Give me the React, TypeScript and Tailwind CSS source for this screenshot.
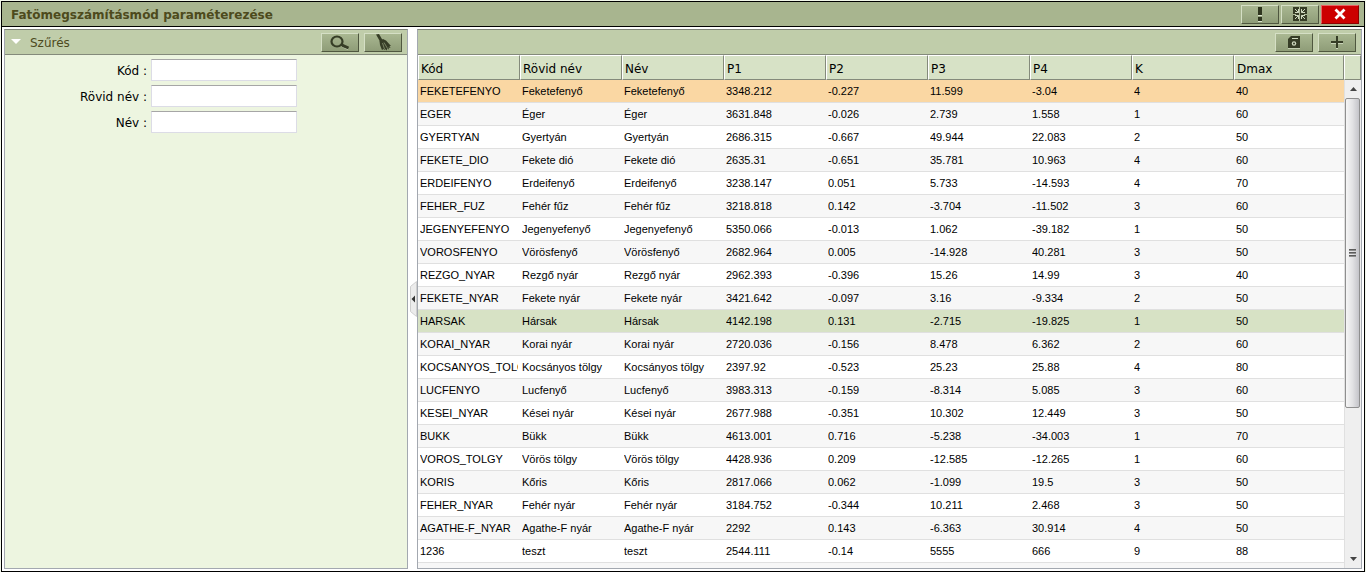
import type { ReactNode } from "react";

type Row = {
  kod: string;
  rovidNev: string;
  nev: string;
  values: string[];
};

const columns = ["Kód", "Rövid név", "Név", "P1", "P2", "P3", "P4", "K", "Dmax"];

const filters = [
  { id: "kod", label: "Kód :" },
  { id: "rovidNev", label: "Rövid név :" },
  { id: "nev", label: "Név :" },
];

function row(kod: string, nev: string, ...values: string[]): Row {
  return { kod, rovidNev: nev, nev, values };
}

const rows: Row[] = [
  row("FEKETEFENYO", "Feketefenyő", "3348.212", "-0.227", "11.599", "-3.04", "4", "40"),
  row("EGER", "Éger", "3631.848", "-0.026", "2.739", "1.558", "1", "60"),
  row("GYERTYAN", "Gyertyán", "2686.315", "-0.667", "49.944", "22.083", "2", "50"),
  row("FEKETE_DIO", "Fekete dió", "2635.31", "-0.651", "35.781", "10.963", "4", "60"),
  row("ERDEIFENYO", "Erdeifenyő", "3238.147", "0.051", "5.733", "-14.593", "4", "70"),
  row("FEHER_FUZ", "Fehér fűz", "3218.818", "0.142", "-3.704", "-11.502", "3", "60"),
  row("JEGENYEFENYO", "Jegenyefenyő", "5350.066", "-0.013", "1.062", "-39.182", "1", "50"),
  row("VOROSFENYO", "Vörösfenyő", "2682.964", "0.005", "-14.928", "40.281", "3", "50"),
  row("REZGO_NYAR", "Rezgő nyár", "2962.393", "-0.396", "15.26", "14.99", "3", "40"),
  row("FEKETE_NYAR", "Fekete nyár", "3421.642", "-0.097", "3.16", "-9.334", "2", "50"),
  row("HARSAK", "Hársak", "4142.198", "0.131", "-2.715", "-19.825", "1", "50"),
  row("KORAI_NYAR", "Korai nyár", "2720.036", "-0.156", "8.478", "6.362", "2", "60"),
  row("KOCSANYOS_TOLGY", "Kocsányos tölgy", "2397.92", "-0.523", "25.23", "25.88", "4", "80"),
  row("LUCFENYO", "Lucfenyő", "3983.313", "-0.159", "-8.314", "5.085", "3", "60"),
  row("KESEI_NYAR", "Kései nyár", "2677.988", "-0.351", "10.302", "12.449", "3", "50"),
  row("BUKK", "Bükk", "4613.001", "0.716", "-5.238", "-34.003", "1", "70"),
  row("VOROS_TOLGY", "Vörös tölgy", "4428.936", "0.209", "-12.585", "-12.265", "1", "60"),
  row("KORIS", "Kőris", "2817.066", "0.062", "-1.099", "19.5", "3", "50"),
  row("FEHER_NYAR", "Fehér nyár", "3184.752", "-0.344", "10.211", "2.468", "3", "50"),
  row("AGATHE-F_NYAR", "Agathe-F nyár", "2292", "0.143", "-6.363", "30.914", "4", "50"),
  row("1236", "teszt", "2544.111", "-0.14", "5555", "666", "9", "88"),
];

const SELECTED = "FEKETEFENYO";
const HIGHLIGHTED = "HARSAK";

function rowColor(r: Row, index: number) {
  if (r.kod === SELECTED) return "bg-[#fad7a3]";
  if (r.kod === HIGHLIGHTED) return "bg-[#d7e2c5]";
  return index % 2 === 0 ? "bg-white" : "bg-[#f7f7f7]";
}

function ToolButton({ label, danger, children }: { label: string; danger?: boolean; children: ReactNode }) {
  return (
    <button
      type="button"
      aria-label={label}
      className={
        danger
          ? "flex h-[19px] w-[38px] items-center justify-center border border-t-[#e86060] border-l-[#e86060] border-r-[#8c0000] border-b-[#8c0000] bg-[#cc0000]"
          : "flex h-[19px] w-[38px] items-center justify-center border border-t-[#d5dfc5] border-l-[#d5dfc5] border-r-[#4f573f] border-b-[#4f573f] bg-linear-to-b from-[#a9b791] to-[#8f9d78]"
      }
    >
      {children}
    </button>
  );
}

function ExclamationIcon() {
  return (
    <svg width="16" height="16" viewBox="0 0 16 16" shapeRendering="crispEdges">
      <path d="M6 9h4v1H6zM6 15h4v1H6z" fill="#dbe3cd" />
      <path d="M6 1h4v8H6zM6 11h4v4H6z" fill="#2f361f" />
    </svg>
  );
}

function ExpandIcon() {
  return (
    <svg width="16" height="16" viewBox="0 0 16 16">
      <path d="M1 1h14v14H1z" fill="#363d26" shapeRendering="crispEdges" />
      <path d="M7 1h1v14H7zM1 8h3v1H1zM12 8h3v1h-3z" fill="#aebb97" shapeRendering="crispEdges" />
      <path
        d="M3 3l3.500 3.500M13 3L9.500 6.500M3 13l3.500-3.500M13 13L9.500 9.500M3 6.500h3.500V3M13 6.500H9.500V3M3 9.500h3.500V13M13 9.500H9.500V13"
        stroke="#d0dac0"
        fill="none"
      />
    </svg>
  );
}

function CloseIcon() {
  return (
    <svg width="16" height="16" viewBox="0 0 16 16">
      <path d="M3.500 3.500l9 9M12.500 3.500l-9 9" stroke="#fff" strokeWidth="2.800" />
    </svg>
  );
}

function SearchIcon() {
  return (
    <svg width="20" height="16" viewBox="0 0 20 16" fill="none">
      <path d="M12 12.500l6 3" stroke="#cdd7bc" />
      <ellipse cx="7" cy="7.500" rx="5.500" ry="5" stroke="#363d26" strokeWidth="2.200" />
      <path d="M11 10.500l2 1" stroke="#363d26" strokeWidth="2" />
      <path d="M12.500 11.300l6 2.700" stroke="#363d26" strokeWidth="3" />
    </svg>
  );
}

function BroomIcon() {
  return (
    <svg width="18" height="18" viewBox="0 0 18 18">
      <path d="M2 1.500L5 1l3.500 6-2.500 1.500z" fill="#363d26" />
      <path d="M5.500 8L9 6l3 1.500L17 13l-1.500 0 1 2-2-.5.500 2-2-1v2l-2-1.500-.5 1-1-1-1.500 1L6 12z" fill="#363d26" />
      <path d="M8.500 10l2 6M10 9.500l3.500 6" stroke="#a9b791" strokeWidth=".6" />
    </svg>
  );
}

function SaveIcon() {
  return (
    <svg width="16" height="16" viewBox="0 0 16 16">
      <path d="M2 14h12v1H2z" fill="#c3ceb0" />
      <path d="M2 5l3-3h9v12H2z" fill="#363d26" />
      <path d="M6 4h6v1H6z" fill="#d0dac0" />
      <circle cx="8" cy="9.500" r="2.200" fill="#d0dac0" />
      <circle cx="8" cy="9.500" r="1" fill="#363d26" />
    </svg>
  );
}

function PlusIcon() {
  return (
    <svg width="16" height="16" viewBox="0 0 16 16" shapeRendering="crispEdges">
      <path d="M2 9h12v1H2zM7 14h2v1H7z" fill="#c9d3b8" />
      <path d="M7 2h2v12H7zM2 7h12v2H2z" fill="#363d26" />
    </svg>
  );
}

function FilterPanel() {
  return (
    <section className="flex w-[404px] shrink-0 flex-col border border-[#a3a8b0] border-t-[#7f8479] bg-[#edf5e0]">
      <header className="flex h-[25px] shrink-0 items-center border-b border-[#848a7b] bg-[#c0cdaa] pr-[5px] pl-1.5">
        <svg width="10" height="6" viewBox="0 0 10 6">
          <path d="M0 0h10L5 5z" fill="#fff" />
        </svg>
        <h2 className="ml-[9px] grow pt-0.5 text-[#4d4a1c]">Szűrés</h2>
        <div className="flex gap-[5px]">
          <ToolButton label="Keresés">
            <SearchIcon />
          </ToolButton>
          <ToolButton label="Szűrés törlése">
            <BroomIcon />
          </ToolButton>
        </div>
      </header>
      <form className="flex flex-col gap-1 pt-1">
        {filters.map((f) => (
          <div key={f.id} className="flex items-center gap-1">
            <label htmlFor={f.id} className="w-[142px] pt-0.5 text-right">
              {f.label}
            </label>
            <input
              id={f.id}
              type="text"
              className="h-[22px] w-[146px] border border-[#dcdce6] border-t-[#a6a6a6] bg-white px-1 outline-none"
            />
          </div>
        ))}
      </form>
    </section>
  );
}

function Scrollbar() {
  return (
    <div className="flex w-[17px] shrink-0 flex-col">
      <div className="h-[25px] shrink-0 border border-t-white border-r-[#848a7b] border-b-[#848a7b] border-l-white bg-[#d7e2c6]" />
      <div className="flex min-h-0 grow flex-col border-l border-[#e0e0e0] bg-[#efefef]">
        <div className="flex h-[18px] shrink-0 items-center justify-center">
          <svg width="7" height="4" viewBox="0 0 7 4">
            <path d="M0 4h7L3.500 0z" fill="#444" />
          </svg>
        </div>
        <div className="flex h-[310px] w-[15px] flex-col items-center justify-center gap-px rounded-xs border border-[#8f8f8f] bg-linear-to-r from-[#f6f6f6] via-[#e2e2e4] to-[#c4c4c9]">
          <span className="h-0.5 w-[7px] bg-linear-to-b from-[#444] to-[#aaa]" />
          <span className="h-0.5 w-[7px] bg-linear-to-b from-[#444] to-[#aaa]" />
          <span className="h-0.5 w-[7px] bg-linear-to-b from-[#444] to-[#aaa]" />
        </div>
        <div className="mt-auto flex h-[18px] shrink-0 items-center justify-center">
          <svg width="7" height="4" viewBox="0 0 7 4">
            <path d="M0 0h7L3.500 4z" fill="#444" />
          </svg>
        </div>
      </div>
    </div>
  );
}

function DataTable() {
  return (
    <div className="flex min-h-0 grow">
      <div className="min-w-0 grow overflow-hidden">
        <table className="w-full table-fixed border-separate border-spacing-0">
          <thead>
            <tr className="h-[25px] bg-[#d7e2c6]">
              {columns.map((c) => (
                <th
                  key={c}
                  className="w-[102px] border border-t-white border-r-[#848a7b] border-b-[#848a7b] border-l-white p-0 pt-0.5 pl-0.5 text-left font-normal last:w-auto"
                >
                  {c}
                </th>
              ))}
            </tr>
          </thead>
          <tbody className="font-['Liberation_Sans',Arial,sans-serif] text-[11px]">
            {rows.map((r, i) => (
              <tr key={r.kod} className={`h-[23px] ${rowColor(r, i)}`}>
                {[r.kod, r.rovidNev, r.nev, ...r.values].map((v, j) => (
                  <td key={j} className="border-b border-[#e0e0e0] p-0 px-0.5">
                    <div className="overflow-hidden whitespace-nowrap">{v}</div>
                  </td>
                ))}
              </tr>
            ))}
            <tr className="h-[23px] bg-[#f7f7f7]">
              <td colSpan={columns.length} />
            </tr>
          </tbody>
        </table>
      </div>
      <Scrollbar />
    </div>
  );
}

export default function App() {
  return (
    <div className="h-screen bg-[#f2f7ea] px-px pt-px font-['DejaVu_Sans',Verdana,sans-serif] text-xs text-black">
      <div className="flex h-full flex-col border border-black bg-white">
        <header className="flex h-[25px] shrink-0 items-center border-b border-black bg-[#a8b58f] pr-[5px] pl-[9px]">
          <h1 className="grow pt-0.5 font-bold text-[#4d4a1c]">Fatömegszámításmód paraméterezése</h1>
          <div className="flex gap-0.5">
            <ToolButton label="Információ">
              <ExclamationIcon />
            </ToolButton>
            <ToolButton label="Teljes méret">
              <ExpandIcon />
            </ToolButton>
            <ToolButton label="Bezárás" danger>
              <CloseIcon />
            </ToolButton>
          </div>
        </header>
        <main className="flex min-h-0 grow p-0.5">
          <FilterPanel />
          <div className="flex w-[9px] shrink-0 items-center justify-end">
            <button type="button" aria-label="Panel elrejtése" className="h-9 w-[7px]">
              <svg width="7" height="36" viewBox="0 0 7 36">
                <path d="M6.500.5L.5 5.500v25l6 5z" fill="#ececec" stroke="#cfcfcf" />
                <path d="M5 14.500v7L1.500 18z" fill="#333" />
              </svg>
            </button>
          </div>
          <section className="flex min-w-0 grow flex-col border border-[#a3a8b0] border-t-[#7f8479]">
            <header className="flex h-[25px] shrink-0 items-center justify-end gap-[5px] border-b border-[#848a7b] bg-[#c0cdaa] pr-[5px]">
              <ToolButton label="Mentés">
                <SaveIcon />
              </ToolButton>
              <ToolButton label="Új sor">
                <PlusIcon />
              </ToolButton>
            </header>
            <DataTable />
          </section>
        </main>
      </div>
    </div>
  );
}
